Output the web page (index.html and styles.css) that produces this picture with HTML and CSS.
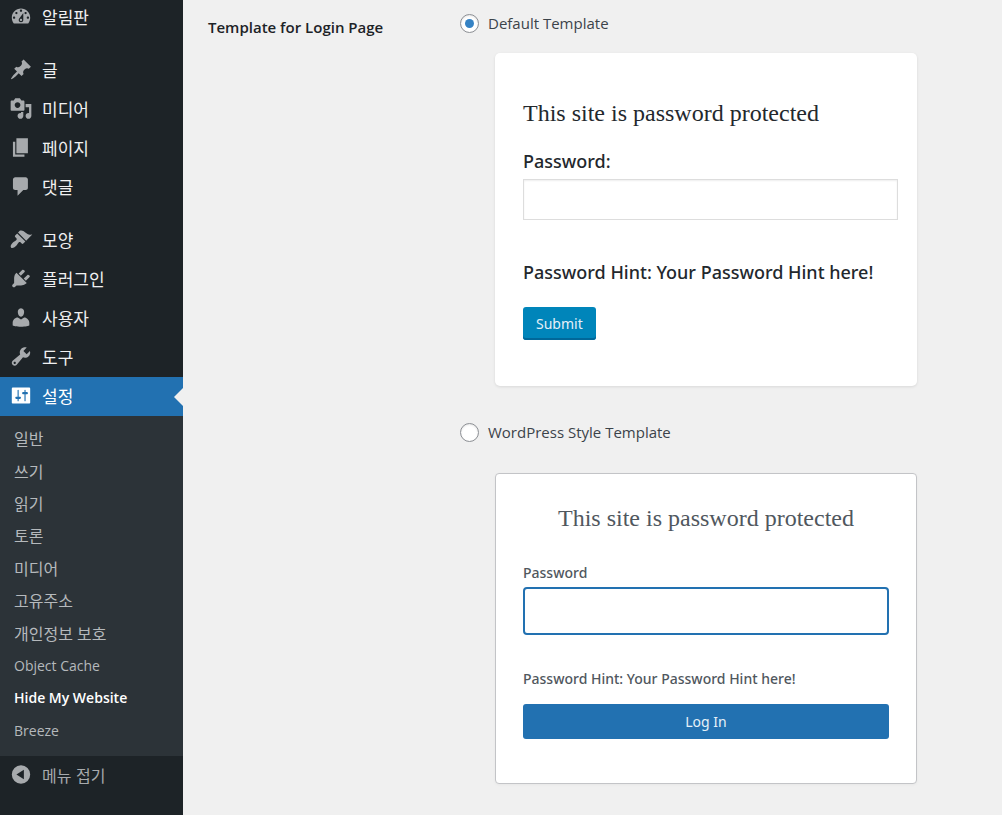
FILE: index.html
```
<!DOCTYPE html>
<html lang="ko">
<head>
    <meta charset="UTF-8">
    <meta name="viewport" content="width=device-width, initial-scale=1.0">
    <title>Hide My Website</title>
    <link rel="stylesheet" href="styles.css">
</head>
<body>
    <div class="wrap">
        <nav class="admin-menu">
            <ul class="menu-group">
                <li><a href="#"><svg viewBox="0 0 20 20"><path fill-rule="evenodd" d="M3.76 16h12.48c1.1-1.37 1.76-3.11 1.76-5 0-4.42-3.58-8-8-8s-8 3.58-8 8c0 1.89.66 3.63 1.76 5zM10 4c.55 0 1 .45 1 1s-.45 1-1 1-1-.45-1-1 .45-1 1-1zM6 6c.55 0 1 .45 1 1s-.45 1-1 1-1-.45-1-1 .45-1 1-1zm8 0c.55 0 1 .45 1 1s-.45 1-1 1-1-.45-1-1 .45-1 1-1zm-5.37 5.55L12 7v6c0 1.1-.9 2-2 2s-2-.9-2-2c0-.57.24-1.08.63-1.45zM4 10c.55 0 1 .45 1 1s-.45 1-1 1-1-.45-1-1 .45-1 1-1zm12 0c.55 0 1 .45 1 1s-.45 1-1 1-1-.45-1-1 .45-1 1-1zm-5 3c0-.55-.45-1-1-1s-1 .45-1 1 .45 1 1 1 1-.45 1-1z"/></svg>알림판</a></li>
            </ul>
            <ul class="menu-group">
                <li><a href="#"><svg viewBox="0 0 20 20"><path d="M10.44 3.02l1.82-1.82 6.36 6.35-1.83 1.82c-1.05-.68-2.48-.57-3.41.36l-.75.75c-.92.93-1.04 2.35-.35 3.41l-1.83 1.82-2.41-2.41-2.8 2.79c-.42.42-3.38 2.71-3.8 2.29s1.86-3.39 2.28-3.81l2.79-2.79L4.1 9.36l1.83-1.82c1.05.69 2.48.57 3.4-.36l.75-.75c.93-.92 1.05-2.35.36-3.41z"/></svg>글</a></li>
                <li><a href="#"><svg viewBox="0 0 20 20"><path fill-rule="evenodd" d="M13 11V4c0-.55-.45-1-1-1h-1.67L9 1H5L3.67 3H2c-.55 0-1 .45-1 1v7c0 .55.45 1 1 1h10c.55 0 1-.45 1-1zM7 4.5c1.38 0 2.5 1.12 2.5 2.5S8.38 9.5 7 9.5 4.5 8.38 4.5 7 5.62 4.5 7 4.5zM14 6h5v10.5c0 1.38-1.12 2.5-2.5 2.5S14 17.88 14 16.5s1.12-2.5 2.5-2.5c.17 0 .34.02.5.05V9h-3V6zm-4 8.05V13h2v3.5c0 1.38-1.12 2.5-2.5 2.5S7 17.88 7 16.5 8.12 14 9.5 14c.17 0 .34.02.5.05z"/></svg>미디어</a></li>
                <li><a href="#"><svg viewBox="0 0 20 20"><path d="M6 15V2h10v13H6zm-1 1h8v2H3V5h2v11z"/></svg>페이지</a></li>
                <li><a href="#"><svg viewBox="0 0 20 20"><path d="M5 2h9c1.1 0 2 .9 2 2v7c0 1.1-.9 2-2 2h-2l-5 5v-5H5c-1.1 0-2-.9-2-2V4c0-1.1.9-2 2-2z"/></svg>댓글</a></li>
            </ul>
            <ul class="menu-group">
                <li><a href="#"><svg viewBox="0 0 20 20"><path d="M14.48 11.06L7.41 3.99l1.5-1.5c.5-.56 2.3-.47 3.51.32 1.21.8 1.43 1.28 2.91 2.1 1.18.64 2.45 1.26 4.45.85zm-.71.71L6.7 4.7 4.93 6.47c-.39.39-.39 1.02 0 1.41l1.06 1.06c.39.39.39 1.03 0 1.42-.6.6-1.43 1.11-2.21 1.69-.35.26-.7.53-1.01.84C1.43 14.23.4 16.08 1.4 17.07c.99 1 2.84-.03 4.18-1.36.31-.31.58-.66.85-1.02.57-.78 1.08-1.61 1.69-2.21.39-.39 1.02-.39 1.41 0l1.06 1.06c.39.39 1.02.39 1.41 0z"/></svg>모양</a></li>
                <li><a href="#"><svg viewBox="0 0 20 20"><path d="M13.11 4.36L9.87 7.6 8 5.73l3.24-3.24c.35-.34 1.05-.2 1.56.32.52.51.66 1.21.31 1.55zm-8 1.77l.91-1.12 9.01 9.01-1.19.84c-.71.71-2.63 1.16-3.82 1.16H6.14L4.9 17.26c-.59.59-1.54.59-2.12 0-.59-.58-.59-1.53 0-2.12l1.24-1.24v-3.88c0-1.13.4-3.19 1.09-3.89zm7.26 3.97l3.24-3.24c.34-.35 1.04-.21 1.55.31.52.51.66 1.21.31 1.55l-3.24 3.25z"/></svg>플러그인</a></li>
                <li><a href="#"><svg viewBox="0 0 20 20"><path d="M10 9.25c-2.27 0-2.73-3.44-2.73-3.44C7 4.02 7.82 2 9.97 2c2.16 0 2.98 2.02 2.71 3.81 0 0-.41 3.44-2.68 3.44zm0 2.57L12.72 10c2.39 0 4.52 2.33 4.52 4.53v2.49s-3.65 1.13-7.24 1.13c-3.65 0-7.24-1.13-7.24-1.13v-2.49c0-2.25 1.94-4.48 4.47-4.48z"/></svg>사용자</a></li>
                <li><a href="#"><svg viewBox="0 0 20 20"><path fill-rule="evenodd" d="M16.68 9.77c-1.34 1.34-3.3 1.67-4.95.99l-5.41 6.52c-.99.99-2.59.99-3.58 0s-.99-2.59 0-3.57l6.52-5.42c-.68-1.65-.35-3.61.99-4.95 1.28-1.28 3.12-1.62 4.72-1.06l-2.89 2.89 2.82 2.82 2.86-2.87c.53 1.58.18 3.39-1.08 4.65zM3.81 16.21c.4.39 1.04.39 1.43 0 .4-.4.4-1.04 0-1.43-.39-.4-1.03-.4-1.43 0-.39.39-.39 1.03 0 1.43z"/></svg>도구</a></li>
                <li class="current"><a href="#"><svg viewBox="0 0 20 20"><path fill-rule="evenodd" d="M18 16V4c0-.55-.45-1-1-1H3c-.55 0-1 .45-1 1v12c0 .55.45 1 1 1h14c.55 0 1-.45 1-1zM8 11h1c.55 0 1 .45 1 1s-.45 1-1 1H8v1.5c0 .28-.22.5-.5.5s-.5-.22-.5-.5V13H6c-.55 0-1-.45-1-1s.45-1 1-1h1V5.5c0-.28.22-.5.5-.5s.5.22.5.5V11zm5-2h-1c-.55 0-1-.45-1-1s.45-1 1-1h1V5.5c0-.28.22-.5.5-.5s.5.22.5.5V7h1c.55 0 1 .45 1 1s-.45 1-1 1h-1v5.5c0 .28-.22.5-.5.5s-.5-.22-.5-.5V9z"/></svg>설정</a></li>
            </ul>
            <ul class="submenu">
                <li><a href="#">일반</a></li>
                <li><a href="#">쓰기</a></li>
                <li><a href="#">읽기</a></li>
                <li><a href="#">토론</a></li>
                <li><a href="#">미디어</a></li>
                <li><a href="#">고유주소</a></li>
                <li><a href="#">개인정보 보호</a></li>
                <li><a href="#" class="latin">Object Cache</a></li>
                <li><a href="#" class="latin active">Hide My Website</a></li>
                <li><a href="#" class="latin">Breeze</a></li>
            </ul>
            <button type="button" class="collapse-btn"><svg viewBox="0 0 20 20"><path fill-rule="evenodd" d="M10 2a8 8 0 1 0 0 16 8 8 0 0 0 0-16zM12.5 5.8v8.4L6 10z"/></svg>메뉴 접기</button>
        </nav>

        <main class="content">
            <h2 class="field-title">Template for Login Page</h2>
            <div class="options">
                <div class="option">
                    <input type="radio" name="template" id="template-default" checked>
                    <label for="template-default">Default Template</label>
                </div>
                <!-- Default template preview -->
                <div class="preview preview-default">
                    <h3>This site is password protected</h3>
                    <label for="default-password">Password:</label>
                    <input type="password" id="default-password">
                    <p>Password Hint: Your Password Hint here!</p>
                    <button type="button">Submit</button>
                </div>

                <div class="option">
                    <input type="radio" name="template" id="template-wp">
                    <label for="template-wp">WordPress Style Template</label>
                </div>
                <!-- WordPress style preview -->
                <div class="preview preview-wp">
                    <h3>This site is password protected</h3>
                    <label for="wp-password">Password</label>
                    <input type="password" id="wp-password">
                    <p>Password Hint: Your Password Hint here!</p>
                    <button type="button">Log In</button>
                </div>
            </div>
        </main>
    </div>
</body>
</html>
```
FILE: styles.css
```
* {
    box-sizing: border-box;
}
body {
    margin: 0;
    background-color: #f0f0f0;
    color: #3c434a;
    font-family: "Open Sans", "Noto Sans CJK KR", sans-serif;
    font-size: 15px;
}
ul {
    list-style: none;
    margin: 0;
    padding: 0;
}
.wrap {
    display: flex;
    min-height: 100vh;
}

/* Sidebar */
.admin-menu {
    width: 183px;
    flex-shrink: 0;
    margin-top: -2px;
    background-color: #1d2327;
}
.menu-group + .menu-group {
    margin-top: 14px;
}
.menu-group a, .collapse-btn {
    display: flex;
    align-items: center;
    gap: 9px;
    width: 100%;
    height: 39px;
    padding: 0 10px 2px 9px;
    color: #f0f0f1;
    font-family: "Noto Sans CJK KR", sans-serif;
    font-size: 17px;
    text-decoration: none;
}
.admin-menu svg {
    width: 24px;
    height: 23px;
    fill: #a7aaad;
}
.current {
    position: relative;
    background-color: #2271b1;
}
.menu-group .current a {
    color: #fff;
}
.admin-menu .current svg {
    fill: #fff;
}
.current::after {
    content: "";
    position: absolute;
    top: 11px;
    right: 0;
    border: 9px solid transparent;
    border-left-width: 0;
    border-right-color: #f0f0f0;
}
.submenu {
    display: flex;
    flex-direction: column;
    min-height: 340px;
    padding: 7px 14px 9px;
    background-color: #2c3338;
}
.submenu li {
    flex: 1;
    display: flex;
    align-items: center;
}
.submenu a {
    color: #b5b9bc;
    font-size: 16px;
    line-height: 24px;
    text-decoration: none;
}
.submenu .latin {
    font-size: 14px;
}
.submenu .active {
    color: #fff;
    font-weight: 600;
}
.collapse-btn {
    border: none;
    background: none;
    color: #a7aaad;
    font-size: 16px;
    cursor: pointer;
}

/* Settings form */
.content {
    flex: 1;
    display: grid;
    grid-template-columns: 252px 1fr;
    align-items: start;
    padding: 11px 25px;
}
.field-title {
    margin: 4px 0 0;
    color: #1d2327;
    font-size: 15px;
    font-weight: 600;
    line-height: 24px;
}
.option {
    display: flex;
    align-items: center;
    gap: 9px;
    line-height: 24px;
}
.option input {
    appearance: none;
    display: grid;
    place-items: center;
    width: 19px;
    height: 19px;
    margin: 0;
    border: 1px solid #8c8f94;
    border-radius: 50%;
    background-color: #fff;
    box-shadow: inset 0 1px 2px rgba(0, 0, 0, 0.1);
}
.option input:checked::before {
    content: "";
    width: 9px;
    height: 9px;
    border-radius: 50%;
    background-color: #3582c4;
}
.preview {
    display: flex;
    flex-direction: column;
    max-width: 422px;
    margin-left: 35px;
    background-color: #fff;
    font-family: "Noto Sans", sans-serif;
}
.preview h3 {
    margin: 0;
    font-family: "Liberation Serif", serif;
    font-size: 24px;
    font-weight: 400;
    line-height: 36px;
}
.preview label {
    line-height: 24px;
}
.preview p {
    line-height: 24px;
}
.preview button {
    border: none;
    border-radius: 3px;
    color: #e5f0f8;
    font-family: "Noto Sans", sans-serif;
    font-size: 14px;
    cursor: pointer;
}
.preview-default {
    margin-top: 18px;
    margin-bottom: 34px;
    padding: 42px 19px 46px 28px;
    border-radius: 5px;
    box-shadow: 0 1px 3px rgba(0, 0, 0, 0.1);
    color: #23282d;
    font-size: 18px;
    font-weight: 500;
}
.preview-default h3 {
    margin-bottom: 18px;
}
.preview-default input {
    height: 41px;
    margin-top: 6px;
    border: 1px solid #ddd;
    box-shadow: inset 0 1px 2px rgba(0, 0, 0, 0.07);
}
.preview-default p {
    margin: 40px 0 23px;
}
.preview-default button {
    align-self: flex-start;
    height: 33px;
    padding: 0 13px;
    background-color: #0085ba;
    box-shadow: inset 0 -2px 0 #006799;
}
.preview-wp {
    margin-top: 29px;
    padding: 26px 27px 44px;
    border: 1px solid #c3c4c7;
    border-radius: 4px;
    box-shadow: 0 1px 3px rgba(0, 0, 0, 0.04);
    color: #50575e;
    font-size: 14px;
    font-weight: 500;
}
.preview-wp h3 {
    margin-bottom: 25px;
    text-align: center;
}
.preview-wp input {
    height: 48px;
    margin-top: 2px;
    border: 2px solid #2271b1;
    border-radius: 4px;
}
.preview-wp p {
    margin: 32px 0 13px;
}
.preview-wp button {
    height: 35px;
    background-color: #2271b1;
}
```
